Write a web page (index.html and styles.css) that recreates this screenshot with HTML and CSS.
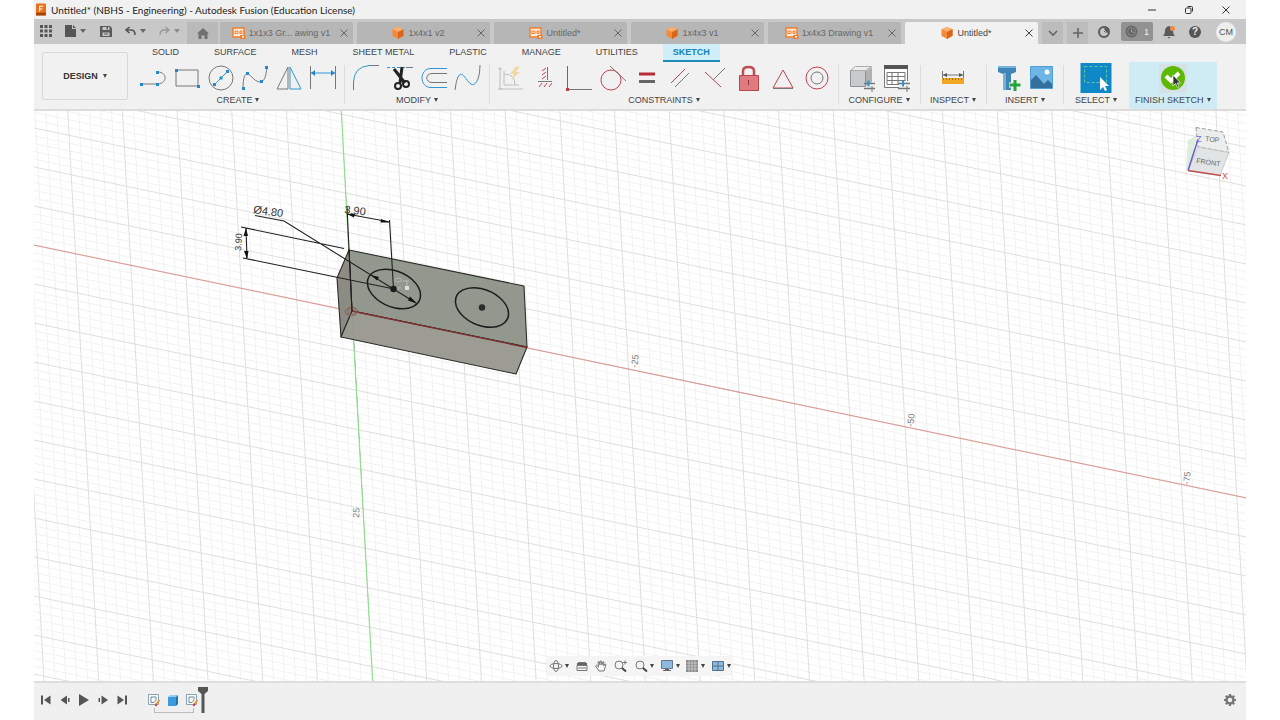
FILE: index.html
```html
<!DOCTYPE html>
<html lang="en">
<head>
<meta charset="utf-8">
<title>Untitled* (NBHS - Engineering) - Autodesk Fusion (Education License)</title>
<link rel="stylesheet" href="styles.css">
</head>
<body>
<svg class="defs" aria-hidden="true">
  <symbol id="cube" viewBox="0 0 12 13"><path fill="#f58a3a" d="M6 0l6 2.500v7L6 13 0 9.500v-7z"/><path fill="#ffb070" d="M6 0l6 2.500L6 5.500 0 2.500z"/><path fill="#d9661c" d="M12 2.500v7L6 13V5.500z"/></symbol>
  <symbol id="drawing" viewBox="0 0 14 12"><path fill="#fdebdc" stroke="#f08030" stroke-width="1.500" d="M1 1h11v9H1z"/><path fill="none" stroke="#f08030" d="M3 4h3v2.500H3zM8 4h2v2.500H8z"/><path fill="#f08030" d="M8 8h5.500v4H8z"/><path fill="#fff" d="M10 9h2v1.500h-2z"/></symbol>
  <symbol id="cross" viewBox="0 0 8 8"><path stroke="currentColor" fill="none" d="M.5.5l7 7M7.500.5l-7 7"/></symbol>
  <symbol id="skt" viewBox="0 0 14 14"><path fill="#f8fafb" stroke="#8aa4b0" d="M1.500 1.500h10v10h-10z"/><path fill="none" stroke="#6b8ea0" d="M4 4h5v3L7 9.500H4z"/><path stroke="#f09030" stroke-width="2" d="M12.500 7L9 11.500"/><path stroke="#d04040" stroke-width="2" d="M8.500 13l1-2"/></symbol>
</svg>
<div class="app">
  <header class="titlebar">
    <svg class="logo" viewBox="0 0 11 13"><rect width="11" height="13" rx="1" fill="#e8701a"/><path fill="#a44306" d="M0 10h11v3H0z"/><path stroke="#fff" stroke-width="1.200" fill="none" d="M4 9V3h4M4 6h3"/></svg>
    <h1 class="title">Untitled* (NBHS - Engineering) - Autodesk Fusion (Education License)</h1>
    <div class="winbtns">
      <button aria-label="Minimize"><svg viewBox="0 0 10 10"><path d="M1 5h8"/></svg></button>
      <button aria-label="Restore"><svg viewBox="0 0 10 10"><rect x="1.500" y="3" width="5.500" height="5.500" rx="1"/><path d="M3.500 1.500h4q1 0 1 1v4"/></svg></button>
      <button aria-label="Close"><svg viewBox="0 0 10 10"><path d="M1.500 1.500l7 7M8.500 1.500l-7 7"/></svg></button>
    </div>
  </header>

  <div class="quickbar">
    <div class="quick">
      <button aria-label="Data panel"><svg width="12" height="12"><path fill="#555" d="M0 0h3v3H0zM4.500 0h3v3h-3zM9 0h3v3H9zM0 4.500h3v3H0zM4.500 4.500h3v3h-3zM9 4.500h3v3H9zM0 9h3v3H0zM4.500 9h3v3h-3zM9 9h3v3H9z"/></svg></button>
      <button aria-label="File" class="drop"><svg width="11" height="12"><path fill="#555" d="M0 0h7v4h4v8H0zM8 0l3 3H8z"/></svg></button>
      <button aria-label="Save"><svg width="12" height="12"><path fill="#5a5a5a" fill-rule="evenodd" d="M0 1h10l2 2v9H0zM2.500 2v3h7V2zM2.500 7.500V11h7V7.500z"/><path fill="#5a5a5a" d="M6.500 2h1.500v2.500H6.500zM4 8.500h4v1H4z"/></svg></button>
      <button aria-label="Undo" class="drop"><svg width="11" height="10"><path fill="none" stroke="#555" stroke-width="1.600" d="M4.500 1L1 4l3.500 3M1 4h5q4 0 4 5"/></svg></button>
      <button aria-label="Redo" class="drop faint"><svg width="11" height="10"><path fill="none" stroke="#777" stroke-width="1.300" d="M6.500 1L10 4 6.500 7M10 4H5Q1 4 1 9"/></svg></button>
    </div>
    <button class="home" aria-label="Home"><svg width="12" height="11"><path fill="#707070" d="M6 0l6 5.500h-1.500V11h-3V7.500h-3V11h-3V5.500H0z"/></svg></button>
    <nav class="tabs">
      <div class="tab"><svg class="ti"><use href="#drawing"/></svg><span>1x1x3 Gr...&nbsp;awing v1</span><button aria-label="Close tab"><svg><use href="#cross"/></svg></button></div>
      <div class="tab"><svg class="ti"><use href="#cube"/></svg><span>1x4x1 v2</span><button aria-label="Close tab"><svg><use href="#cross"/></svg></button></div>
      <div class="tab"><svg class="ti"><use href="#drawing"/></svg><span>Untitled*</span><button aria-label="Close tab"><svg><use href="#cross"/></svg></button></div>
      <div class="tab"><svg class="ti"><use href="#cube"/></svg><span>1x4x3 v1</span><button aria-label="Close tab"><svg><use href="#cross"/></svg></button></div>
      <div class="tab"><svg class="ti"><use href="#drawing"/></svg><span>1x4x3 Drawing v1</span><button aria-label="Close tab"><svg><use href="#cross"/></svg></button></div>
      <div class="tab active"><svg class="ti"><use href="#cube"/></svg><span>Untitled*</span><button aria-label="Close tab"><svg><use href="#cross"/></svg></button></div>
    </nav>
    <div class="status">
      <button class="sq" aria-label="Tab list"><svg width="10" height="7"><path fill="none" stroke="#666" stroke-width="1.600" d="M1 1l4 4 4-4"/></svg></button>
      <button class="sq" aria-label="New tab"><svg width="10" height="10"><path stroke="#666" stroke-width="1.600" d="M5 0v10M0 5h10"/></svg></button>
      <button class="ext" aria-label="Extensions"><svg width="14" height="14"><circle cx="7" cy="7" r="5" fill="none" stroke="#5a5a5a" stroke-width="2"/><path fill="#5a5a5a" d="M7 7l1-6 5 3-2 1 1 3z"/><path stroke="#c8c8c8" d="M6 4l3 3"/></svg></button>
      <button class="jobs" aria-label="Job status"><svg width="13" height="13"><circle cx="6.500" cy="6.500" r="6" fill="#666"/><circle cx="6.500" cy="6.500" r="4" fill="none" stroke="#8c8c8c"/><path fill="none" stroke="#999" d="M6.500 4v3H9"/></svg><span>1</span></button>
      <button class="bell" aria-label="Notifications"><svg width="13" height="14"><path fill="#5a5a5a" d="M6 1q4 1 4 5 0 3 2 5H0q2-2 2-5 0-4 4-5zM4.500 12h3L6 13.500z"/><circle cx="9.500" cy="3.500" r="2.500" fill="#ee8a4a"/></svg></button>
      <button class="help" aria-label="Help">?</button>
      <button class="avatar">CM</button>
    </div>
  </div>

  <div class="ribbon">
    <button class="design drop">DESIGN</button>
    <div class="ribbonmain">
      <nav class="modes">
        <button>SOLID</button><button>SURFACE</button><button>MESH</button><button>SHEET METAL</button><button>PLASTIC</button><button>MANAGE</button><button>UTILITIES</button><button class="on">SKETCH</button>
      </nav>
      <div class="groups">
        <section class="group create">
          <div class="icons">
            <button aria-label="Line"><svg viewBox="0 0 34 30"><path class="g" d="M5 21h17M22 21c10-1 9-12 0-12"/><path class="bd" d="M4 20h3v3H4zM20 20h3v3h-3zM20 8h3v3h-3z"/></svg></button>
            <button aria-label="Rectangle"><svg viewBox="0 0 34 30"><path class="g" d="M6 7h22v16H6z"/><path class="bd" d="M5 6h3v3H5zM27 22h3v3h-3z"/></svg></button>
            <button aria-label="Circle"><svg viewBox="0 0 34 30"><circle class="g" cx="17" cy="15" r="12"/><path class="b" d="M11 21L23 9"/><path class="bd" d="M9 20h3v3H9zM15.500 13.500h3v3h-3zM22 7h3v3h-3z"/></svg></button>
            <button aria-label="Spline"><svg viewBox="0 0 34 30"><path class="g" d="M5 26C5 14 7 10 10 11S16 18 21 19 28 14 29 4"/><path class="bd" d="M4 24h3v3H4zM8 9h3v3H8zM22 17h3v3h-3zM27 3h3v3h-3z"/></svg></button>
            <button aria-label="Mirror"><svg viewBox="0 0 34 30"><path class="g" d="M16 4L5 26h11z"/><path class="b" d="M18 4l11 22H18z"/></svg></button>
            <button aria-label="Dimension"><svg viewBox="0 0 34 30"><path class="g" d="M4.500 3v23M29.500 3v23"/><path class="b" d="M5 10h24"/><path class="bd" d="M5 10l4-3v6zM29 10l-4-3v6z"/></svg></button>
          </div><button class="drop">CREATE</button>
        </section>
        <section class="group">
          <div class="icons">
            <button aria-label="Fillet"><svg viewBox="0 0 34 30"><path class="g" d="M4.500 27v-8M20 2.500h10"/><path class="b" d="M4.500 19Q5 4 20 2.500"/></svg></button>
            <button aria-label="Trim"><svg viewBox="0 0 34 30"><path class="b" stroke-dasharray="3 2" d="M4 4.500h18"/><path class="g" d="M23 4.500h7"/><path d="M11 6l11 14M19 4l-2 16" stroke="#222" stroke-width="3"/><circle cx="15" cy="23" r="3" class="k"/><circle cx="23" cy="21" r="3" class="k"/></svg></button>
            <button aria-label="Offset"><svg viewBox="0 0 34 30"><path class="b" d="M30 5.500H14c-12 0-12 19 0 19h16"/><path class="g" d="M30 10.500H15c-7 0-7 9 0 9h15"/></svg></button>
            <button aria-label="Curve"><svg viewBox="0 0 34 30"><path class="g" d="M4 27Q5 18 7 14M27 16q2-5 2-14"/><path class="b" d="M7 14c6-12 12 20 20 2"/></svg></button>
          </div><button class="drop">MODIFY</button>
        </section>
        <section class="group">
          <div class="icons">
            <button aria-label="Auto constrain"><svg class="dim" viewBox="0 0 34 30"><path class="g" d="M6 4v22h23M10 8v14h15M10 11q11 0 11 11M4 6h4M4 26h4"/><path fill="#f0b93a" d="M22 3l-6 8h4l-3 6 9-8h-4l4-5z"/></svg></button>
            <button aria-label="Horizontal/Vertical"><svg viewBox="0 0 34 30"><path class="g" d="M19.500 4v13M10 18.500h14"/><path class="r" d="M14 8l4-3M14 12l4-3M14 16l4-3M11 24l3-4M16 24l3-4M21 24l3-4"/></svg></button>
            <button aria-label="Perpendicular"><svg viewBox="0 0 34 30"><path class="r" d="M5.500 3v23"/><path class="g" d="M6 26.500h24"/><path fill="#c43a4c" d="M4 25h3v3H4z"/></svg></button>
            <button aria-label="Tangent"><svg viewBox="0 0 34 30"><circle class="r" cx="15" cy="17" r="10"/><path class="g" d="M14 3l16 15"/></svg></button>
            <button aria-label="Equal"><svg viewBox="0 0 34 30"><path d="M9 11h16" stroke="#b92a36" stroke-width="3"/><path d="M9 18.500h16" stroke="#666" stroke-width="3"/></svg></button>
            <button aria-label="Parallel"><svg viewBox="0 0 34 30"><path class="r" d="M7 20L21 6"/><path class="g" d="M11 24l14-14"/></svg></button>
            <button aria-label="Symmetry"><svg viewBox="0 0 34 30"><path class="r" d="M7 9l16 15"/><path class="g" d="M15 17L27 5"/></svg></button>
            <button aria-label="Fix"><svg viewBox="0 0 34 30"><path d="M11 13V8q0-4 5.500-4T22 8v5" fill="none" stroke="#c14c54" stroke-width="2.500"/><path fill="#df7b7f" stroke="#b9454e" d="M7.500 12.500h19v15h-19z"/><path stroke="#98343d" d="M16.500 17v5"/></svg></button>
            <button aria-label="Polygon"><svg viewBox="0 0 34 30"><path class="r" d="M17 7L7 25h20z"/><path class="g" d="M7 25.500h20"/></svg></button>
            <button aria-label="Concentric"><svg viewBox="0 0 34 30"><circle class="r" cx="17" cy="15" r="11"/><circle class="g" cx="17" cy="15" r="6"/></svg></button>
          </div><button class="drop">CONSTRAINTS</button>
        </section>
        <section class="group roomy">
          <div class="icons">
            <button aria-label="Configure model"><svg viewBox="0 0 34 30"><path fill="#c9cacc" stroke="#8e9092" d="M5.500 7.500h15v16h-15z"/><path fill="#eceded" stroke="#aaa" d="M5.500 7.500l5-4h16l-6 4z"/><path fill="#aeb0b2" d="M21 8l6-4v15l-6 4z"/><path class="g" stroke-width="1.500" d="M19 20.500h11M19 25.500h11"/><path stroke="#2d93d2" stroke-width="2" d="M23.500 17.500v6"/><path class="g" d="M27 23v6"/></svg></button>
            <button aria-label="Configuration table"><svg viewBox="0 0 34 30"><path fill="#fff" stroke="#777" d="M5.500 3.500h23v21h-23z"/><path fill="#555" d="M5 2h24v4H5z"/><path class="g" d="M8 9.500h18v12H8zM8 13.500h18M8 17.500h18M13 9v12M19 9v12"/><path fill="#f0f0f0" d="M20 18h11v11H20z"/><path class="g" stroke-width="1.500" d="M19 20.500h12M19 25.500h12"/><path stroke="#2d93d2" stroke-width="2" d="M24 17.500v6"/><path class="g" d="M28 23v6"/></svg></button>
          </div><button class="drop">CONFIGURE</button>
        </section>
        <section class="group inspect">
          <div class="icons">
            <button aria-label="Measure"><svg viewBox="0 0 34 30"><path class="g" d="M6.500 8v9M27.500 8v9M7 12h20"/><path fill="#555" d="M7 12l4-2v4zM27 12l-4-2v4z"/><path fill="#efa724" d="M6 15h22v6H6z"/><path stroke="#a8741a" stroke-dasharray="1 2" stroke-width="2" d="M7 16h20"/></svg></button>
          </div><button class="drop">INSPECT</button>
        </section>
        <section class="group">
          <div class="icons">
            <button aria-label="Insert fastener"><svg viewBox="0 0 34 30"><path fill="#3f86b7" d="M7 3h18v6l-5 2v16h-8V11L7 9z"/><path fill="#75b2d9" d="M7 3h18v2H7zM12 10h3v17h-3z"/><path stroke="#f0f0f0" stroke-width="5" d="M24 16v12M18 22h12"/><path stroke="#25a33a" stroke-width="3" d="M24 17v11M18.500 22h11"/></svg></button>
            <button aria-label="Insert image"><svg viewBox="0 0 34 30"><path fill="#6db5e4" stroke="#4d9fd4" d="M5.500 3.500h22v22h-22z"/><circle cx="22" cy="9" r="2.500" fill="#fff"/><path fill="#346f9d" d="M6 17l5-5 8 9 4-4 4 4v4H6z"/></svg></button>
          </div><button class="drop">INSERT</button>
        </section>
        <section class="group select">
          <div class="icons">
            <button aria-label="Select"><svg viewBox="0 0 34 30"><path fill="#0f88c8" d="M1.500 0h31v30h-31z"/><path fill="none" stroke="#5cc6a0" stroke-dasharray="3 2" d="M5.500 3.500h22v16h-22z"/><path fill="#fff" d="M21 14v13l3-3 2 4 2-1-2-4h4z"/></svg></button>
          </div><button class="drop">SELECT</button>
        </section>
        <section class="group finish">
          <div class="icons">
            <button aria-label="Finish sketch"><svg viewBox="0 0 34 30"><path fill="#d5e1e5" d="M3 1h28v29H3z"/><circle cx="17" cy="15" r="12" fill="#5db904"/><path fill="none" stroke="#fff" stroke-width="4" d="M10 13l5 5 8-8"/><path fill="#333" stroke="#fff" stroke-width=".7" d="M17 12v11l2.500-2.500 2 4 1.500-1-2-3.500h3.500z"/></svg></button>
          </div><button class="drop">FINISH SKETCH</button>
        </section>
      </div>
    </div>
  </div>

  <main class="canvas">
    <svg class="scene" viewBox="34 110 1212 572" preserveAspectRatio="xMidYMid slice" role="img" aria-label="Sketch canvas">
      <g id="grid"></g>
      <path stroke="#8fe08f" stroke-width="1.200" d="M341.300 110L352 311.400 372.700 682"/>
      <path stroke="#d9a09a" stroke-width="1.200" d="M0 238L352 311.400 1286 506.300"/>
      <g class="axis">
        <text transform="translate(637 368) rotate(-82)">-25</text>
        <text transform="translate(913 427) rotate(-82)">-50</text>
        <text transform="translate(1189 485) rotate(-82)">-75</text>
        <text transform="translate(359 518) rotate(-86)">25</text>
      </g>
      <g stroke="#2b2b28" stroke-width="1.100" stroke-linejoin="round">
        <path fill="#8c9287" fill-opacity=".94" d="M349 250l175 36 3 61-175-36z"/>
        <path fill="#85857c" fill-opacity=".94" d="M349 250l-12 28 4 59 11-26z"/>
        <path fill="#96968d" fill-opacity=".94" d="M352 311l175 36-11 27-175-37z"/>
      </g>
      <path stroke="#7d2f2f" stroke-width="1.300" d="M352 311l175 36.500"/>
      <g fill="none" stroke="#8a6459"><ellipse cx="351.500" cy="311.500" rx="6.500" ry="4"/><path d="M348 308h7v6h-7z"/></g>
      <g fill="none" stroke="#1c1c1c" stroke-width="1.500">
        <circle class="hole" r="2.400" transform="matrix(11.060 2.310 .430 7.890 394 289)"/>
        <circle class="hole" r="2.400" transform="matrix(11.060 2.310 .430 7.890 482 307.500)"/>
      </g>
      <g fill="none" stroke="#b5bab2"><ellipse cx="398" cy="280" rx="3.500" ry="2"/><path d="M403 281h6M407 281v7M397 288h4"/></g>
      <path fill="#ddd" d="M405 286h4v4h-4z"/>
      <circle cx="393.500" cy="289" r="3.200" fill="#1c1c1c"/><circle cx="482" cy="307.500" r="3.200" fill="#2c2c2c"/>
      <path fill="none" stroke="#202020" stroke-width="1.100" d="M255 215.500l29 5.500 132 82M347 207l5 104M347 214l43 8M389.500 220l4 69M241 227l103 21.500M243 258l151 31M246 228l1 30"/>
      <path fill="#111" d="M347 214l8-.5-1 4zM390 222.500l-9-3.500-.5 3.500zM246 228l-2.500 8h4.500zM247 259l-3-8h4.500zM371 275l8 2-2 3.500zM417 303.500l-9-3 2-4z"/>
      <g class="dims">
        <text transform="translate(253 213) rotate(8)">Ø4.80</text>
        <text transform="translate(344 213) rotate(7)">3.90</text>
        <text class="narrow" transform="translate(241 251) rotate(-86)">3.90</text>
      </g>
      <g class="viewcube">
        <path fill="#c5e5c5" opacity=".6" d="M1188 140l8-4-3 22-7 13z"/>
        <path fill="#eceeee" stroke="#858585" stroke-dasharray="4 2" stroke-width=".8" d="M1196 127.500l27 4.500 6 20.500-31-5.500z"/>
        <path fill="#e1e4e4" stroke="#aaa" stroke-width=".5" d="M1198 147l31 5.500-9 23-32-4.500z"/>
        <path stroke="#6a5ad8" stroke-width="1.500" d="M1188 170.500l10-31"/>
        <path stroke="#c25050" stroke-width="1.500" d="M1188 170.500l33 5"/>
        <text transform="translate(1205 141) rotate(6)">TOP</text>
        <text transform="translate(1196 163) rotate(8)">FRONT</text>
        <text class="z" x="1196" y="142">Z</text><text class="x" x="1222" y="179">X</text>
      </g>
    </svg>
    <div class="navbar">
      <button class="drop" aria-label="Orbit"><svg viewBox="0 0 14 12"><ellipse cx="7" cy="6" rx="6" ry="2.500" class="g"/><ellipse cx="7" cy="6" rx="2.500" ry="5.500" class="g"/></svg></button>
      <button aria-label="Look at"><svg viewBox="0 0 14 12"><path class="g" d="M2 5.500h10v5H2zM3 2.500h8M3 8h8"/><path fill="#666" d="M2 3h10v2H2z"/></svg></button>
      <button aria-label="Pan"><svg viewBox="0 0 14 12"><path class="g" d="M5 11L1.500 6l1-.8L4.500 7 4 2l1-.5L6 5V1h1.200L8 5l1-3.500 1 .5-.5 4L11 4l1 .5L10 11z"/></svg></button>
      <button aria-label="Zoom"><svg viewBox="0 0 14 12"><circle class="g" cx="5" cy="5" r="4"/><path d="M8 8l4 3.500" stroke="#444" stroke-width="2"/><path class="g" d="M9 2.500h4M11 .5v4"/></svg></button>
      <button class="drop" aria-label="Fit"><svg viewBox="0 0 14 12"><circle class="g" cx="6" cy="5" r="4"/><path d="M9 8l4 3.500" stroke="#444" stroke-width="2"/></svg></button>
      <button class="drop" aria-label="Display settings"><svg viewBox="0 0 14 12"><path fill="#8db9de" stroke="#66788a" d="M1.500.5h11v8h-11z"/><path fill="#666" d="M5 9h4v1h2v1H3v-1h2z"/></svg></button>
      <button class="drop" aria-label="Grid settings"><svg viewBox="0 0 14 12"><path fill="#8c8c8c" d="M1 0h12v12H1z"/><path stroke="#ddd" stroke-width=".6" d="M4 0v12M7 0v12M10 0v12M1 3h12M1 6h12M1 9h12"/></svg></button>
      <button class="drop" aria-label="Viewports"><svg viewBox="0 0 14 12"><path fill="#8db9de" stroke="#54718b" d="M1.500 1.500h11v9h-11zM7 1.500v9M1.500 6h11"/></svg></button>
    </div>
  </main>

  <footer class="timeline">
    <div class="play">
      <button aria-label="To start"><svg viewBox="0 0 10 12"><path d="M0 1.500h2v9H0zM9.500 1.500v9L3 6z"/></svg></button>
      <button aria-label="Step back"><svg viewBox="0 0 10 12"><path d="M7 1.500v9L.5 6zM8 4h1.500v4H8z"/></svg></button>
      <button aria-label="Play"><svg viewBox="0 0 10 12"><path d="M0 0l10 6-10 6z"/></svg></button>
      <button aria-label="Step forward"><svg viewBox="0 0 10 12"><path d="M3.500 1.500v9L10 6zM.5 4H2v4H.5z"/></svg></button>
      <button aria-label="To end"><svg viewBox="0 0 10 12"><path d="M8 1.500h2v9H8zM.5 1.500v9L7 6z"/></svg></button>
    </div>
    <div class="features">
      <button aria-label="Sketch 1"><svg><use href="#skt"/></svg></button>
      <button aria-label="Extrude 1"><svg viewBox="0 0 14 14"><path fill="#3b9bdc" d="M2 4h8v9H2z"/><path fill="#8ecbf2" d="M2 4l2-2h8l-2 2z"/><path fill="#2274ac" d="M10 4l2-2v9l-2 2z"/></svg></button>
      <button aria-label="Sketch 2"><svg><use href="#skt"/></svg></button>
      <svg class="marker" viewBox="0 0 10 26"><path fill="#555" d="M0 0h10v4L6.500 7v19h-3V7L0 4z"/></svg>
    </div>
    <button class="gear" aria-label="Settings"><svg viewBox="0 0 14 14"><circle cx="7" cy="7" r="3.500" fill="none" stroke="#777" stroke-width="2.500"/><path stroke="#777" stroke-width="2.200" d="M7 1v2M7 11v2M1 7h2M11 7h2M2.800 2.800l1.400 1.400M9.800 9.800l1.400 1.400M11.200 2.800L9.800 4.200M4.200 9.800l-1.400 1.400"/></svg></button>
  </footer>
</div>
<script src="grid.js"></script>
</body>
</html>
```
FILE: grid.js
```js
// Draws the sketch plane grid: one step is a millimetre, every fifth line is heavier.
const origin = [352, 311.4];
const u = [11.06, 2.308];
const v = [0.428, 7.89];
const span = 130;
const paths = { minor: "", major: "" };
const at = (a, b) =>
  (origin[0] + a * u[0] + b * v[0]).toFixed(2) + " " + (origin[1] + a * u[1] + b * v[1]).toFixed(2);
for (let i = -span; i <= span; i++) {
  if (i === 0) continue;
  const kind = i % 5 === 0 ? "major" : "minor";
  paths[kind] += "M" + at(i, -span) + "L" + at(i, span);
  paths[kind] += "M" + at(-span, i) + "L" + at(span, i);
}
for (const kind of ["minor", "major"]) {
  const p = document.createElementNS("http://www.w3.org/2000/svg", "path");
  p.setAttribute("class", kind);
  p.setAttribute("d", paths[kind]);
  document.getElementById("grid").appendChild(p);
}
```
FILE: styles.css
```css
* { box-sizing: border-box; }
body { margin: 0; background: #fff; font-family: "Liberation Sans", Arial, sans-serif; font-size: 9px; color: #444; }
button { margin: 0; padding: 0; border: 0; background: none; font: inherit; color: inherit; display: inline-flex; align-items: center; justify-content: center; white-space: nowrap; }
svg { display: block; flex: none; }
.defs { position: absolute; width: 0; height: 0; }
.app { height: 100vh; margin: 0 34px; display: flex; flex-direction: column; overflow: hidden; }
.drop::after { content: ""; border: 2px solid transparent; border-top: 4px solid #444; border-bottom: 0; margin-left: 3px; }

.titlebar { flex: none; height: 19px; background: #f1f1f1; display: flex; align-items: center; padding: 0 15px 0 2px; gap: 5px; }
.logo { width: 10px; height: 13px; }
.title { margin: 0; flex: 1; font: 400 10px/18px Lato, "Open Sans", sans-serif; color: #222; }
.winbtns { display: flex; gap: 27px; }
.winbtns svg { width: 10px; height: 10px; fill: none; stroke: #333; }

.quickbar { flex: none; height: 25px; background: #c8c8c8; display: flex; align-items: stretch; }
.quick { width: 153px; padding: 0 7px 2px 6px; display: flex; align-items: center; justify-content: space-between; }
.quick .drop::after { margin-left: 4px; border-width: 4px 3px 0; border-top-color: #666; }
.faint { opacity: .6; }
.home { width: 31px; background: #b9b9b9; margin: 3px 2px 0 0; }
.tabs { flex: 1; display: flex; gap: 4px; padding-top: 3px; }
.tab { flex: 1; background: #b6b6b6; border-radius: 2px 2px 0 0; display: flex; align-items: center; padding: 0 5px 0 0; color: #666; white-space: nowrap; }
.tab::before { content: ""; flex: 1; }
.tab .ti { width: 14px; height: 12px; margin-right: 3px; }
.tab button { flex: 1; justify-content: flex-end; margin-left: 6px; }
.tab button svg { width: 8px; height: 8px; }
.tab.active { background: #f1f1f1; color: #444; }
.status { flex: none; width: 208px; display: flex; align-items: center; padding: 0 10px 0 4px; gap: 4px; }
.sq { width: 21px; height: 22px; align-self: flex-end; background: #bcbcbc; }
.ext { margin-left: 5px; }
.jobs { width: 32px; height: 19px; margin-left: 6px; background: #929292; border-radius: 2px; gap: 6px; color: #eee; }
.bell { margin-left: 6px; }
.help { width: 12px; height: 12px; margin-left: 9px; border-radius: 50%; background: #555; color: #eee; font-weight: 700; font-size: 10px; }
.avatar { width: 20px; height: 20px; margin-left: auto; border-radius: 50%; background: #eee; color: #555; }

.ribbon { flex: none; background: #f1f1f1; border-bottom: 2px solid #dcdcdc; display: flex; }
.design { width: 86px; height: 48px; margin: 8px 8px 0; border: 1px solid #d8d8d8; border-radius: 2px; font-weight: 700; color: #333; }
.design.drop::after { margin-left: 5px; }
.ribbonmain { flex: 1; min-width: 0; }
.modes { display: flex; gap: 15px; height: 18px; padding-left: 6px; }
.modes button { padding: 0 10px 2px; }
.modes .on { background: #cfeef7; color: #1583b8; font-weight: 700; border-bottom: 2px solid #1e8bb8; padding-bottom: 0; }
.groups { display: flex; height: 47px; }
.group { display: flex; flex-direction: column; align-items: center; padding: 0 4px 0 5px; position: relative; }
.group:not(:first-child):not(.finish)::before { content: ""; position: absolute; left: 0; top: 3px; bottom: 5px; border-left: 1px solid #dcdcdc; }
.group.create { padding-left: 0; }
.icons { display: flex; padding-top: 1px; }
.icons svg { width: 34px; height: 30px; }
.group > button { height: 13px; }
.group.roomy { padding: 0 7px; }
.group.inspect { padding: 0 10px; }
.group.select { padding: 0 12px; }
.group.finish { background: #cfecf4; padding: 0 6px; }
.g { fill: none; stroke: #777; }
.b { fill: none; stroke: #2f95d6; }
.bd { fill: #2587cc; }
.r { fill: none; stroke: #c6404f; }
.k { fill: none; stroke: #222; stroke-width: 2; }
.dim { opacity: .4; }

.canvas { flex: 1; min-height: 0; position: relative; background: #fff; overflow: hidden; }
.scene { width: 100%; height: 100%; }
.minor { stroke: #f2f2f2; fill: none; }
.major { stroke: #dfdfdf; fill: none; }
.hole { vector-effect: non-scaling-stroke; }
.axis text { font-size: 9px; fill: #777; }
.dims text { font-size: 11px; fill: #333; }
.dims .narrow { font-size: 9px; }
.viewcube text { font-size: 7px; fill: #666; }
.viewcube .x { font-size: 9px; fill: #d05050; }
.viewcube .z { font-size: 9px; fill: #7a6ae0; }
.navbar { position: absolute; left: 50%; bottom: 5px; transform: translateX(-50%); width: 186px; height: 20px; padding: 0 2px; background: #f5f5f5; display: flex; align-items: center; justify-content: space-between; }
.navbar svg { width: 14px; height: 12px; }
.navbar .drop::after { margin-left: 2px; }

.timeline { flex: none; height: 39px; background: #f0f0f0; border-top: 2px solid #dedede; display: flex; align-items: center; padding: 0 9px 3px 7px; }
.play { display: flex; gap: 9px; }
.play svg { width: 10px; height: 12px; fill: #555; }
.features { display: flex; align-items: center; gap: 5px; margin-left: 20px; position: relative; }
.features button svg { width: 14px; height: 14px; }
.features::after { content: ""; position: absolute; left: 7px; width: 38px; top: 21px; height: 4px; border: 1px solid #bbb; border-top: 0; }
.features .marker { width: 10px; height: 26px; margin-left: -6px; }
.gear { margin-left: auto; }
.gear svg { width: 14px; height: 14px; }
```
